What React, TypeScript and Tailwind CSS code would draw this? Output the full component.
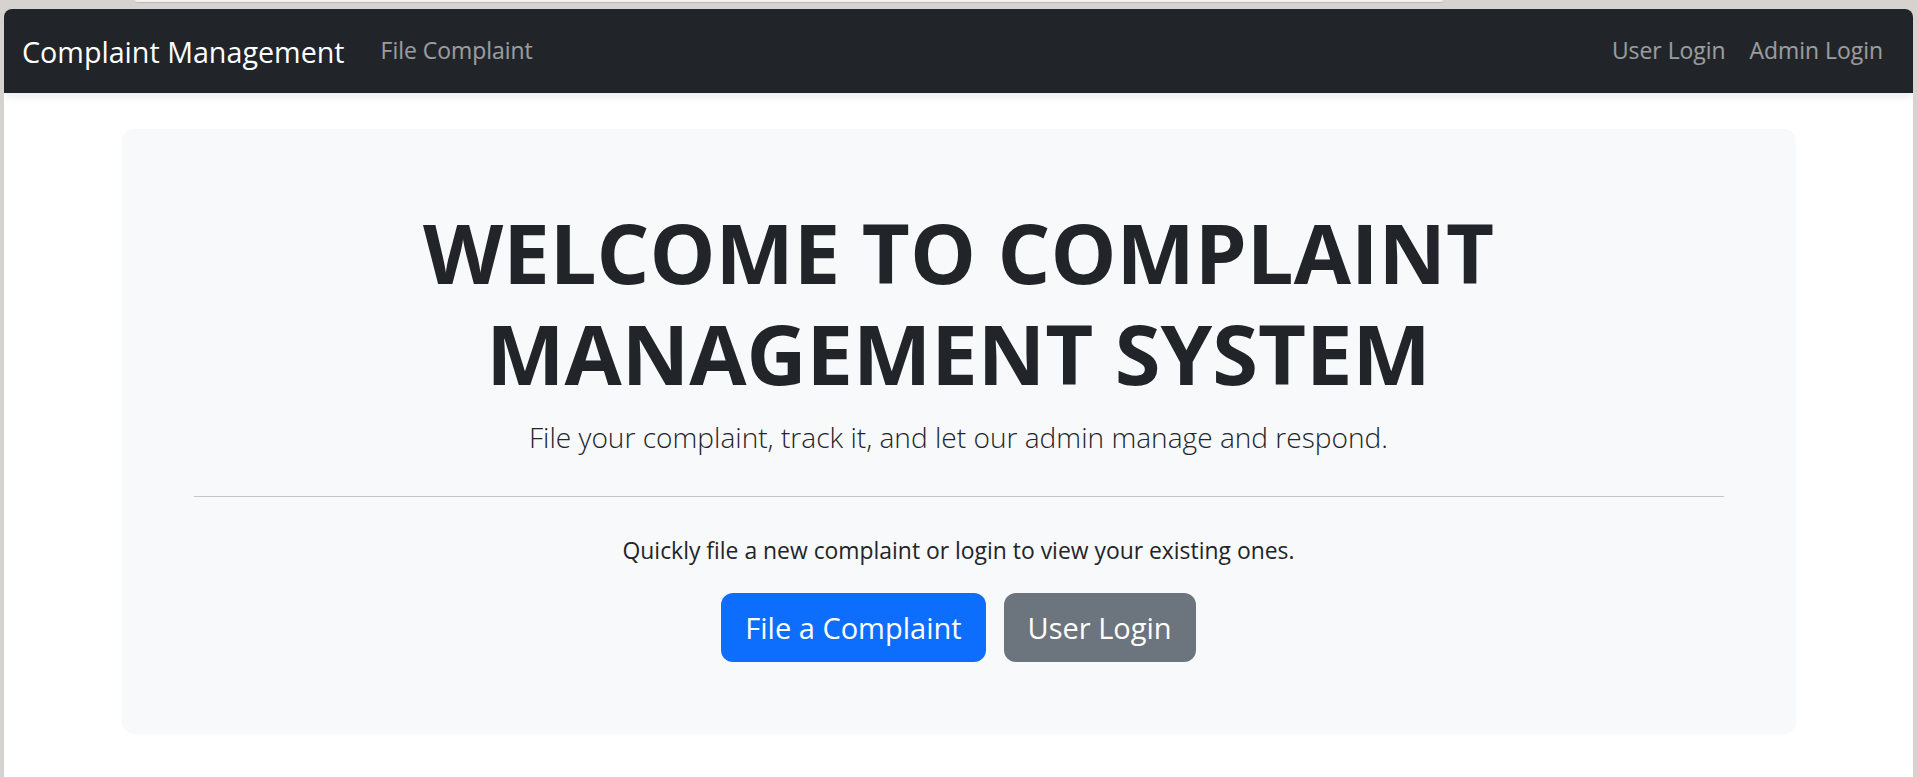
export default function App() {
  return (
    <div className="relative min-h-screen bg-[#d6d2d0] pl-[4px] pr-[5px] pt-[9px] font-['Open_Sans',sans-serif] text-[#212529]">
      {/* browser chrome strip above the window */}
      <div className="absolute left-[135px] top-0 h-[3px] w-[1308px] rounded-b-md border-b border-[#bcb8b6] bg-[#f3f1f0]" />

      <div className="min-h-[768px] overflow-hidden rounded-t-lg bg-white">
        <nav className="relative z-10 flex h-[84px] items-center bg-[#212529] px-[18px] shadow-[0_4px_8px_rgba(0,0,0,0.08)]">
          <span className="mr-[24px] text-[28.7px] leading-[45px] text-white">Complaint Management</span>
          <a className="px-[12px] text-[22.9px] leading-[36px] text-white/55">File Complaint</a>
          <div className="ml-auto flex">
            <a className="px-[12px] text-[22.9px] leading-[36px] text-white/55">User Login</a>
            <a className="px-[12px] text-[22.9px] leading-[36px] text-white/55">Admin Login</a>
          </div>
        </nav>

        <div className="mx-auto mt-[36px] w-[1674px] rounded-[12px] bg-[#f8f9fa] p-[72px] text-center">
          <h1 className="mb-[12px] text-[83px] font-bold leading-[101px]">
            WELCOME TO COMPLAINT
            <br />
            MANAGEMENT SYSTEM
          </h1>
          <p className="text-[28.1px] font-light leading-[45px]">
            File your complaint, track it, and let our admin manage and respond.
          </p>
          <hr className="my-[36px] border-t-[1.5px] border-[#c4c5c6]" />
          <p className="mb-[24px] text-[22.9px] leading-[36px]">
            Quickly file a new complaint or login to view your existing ones.
          </p>
          <div className="flex justify-center gap-[18px]">
            <button className="rounded-[12px] bg-[#0d6efd] px-[24px] py-[12px] text-[29px] leading-[45px] text-white">
              File a Complaint
            </button>
            <button className="rounded-[12px] bg-[#6c757d] px-[24px] py-[12px] text-[29px] leading-[45px] text-white">
              User Login
            </button>
          </div>
        </div>
      </div>
    </div>
  );
}
